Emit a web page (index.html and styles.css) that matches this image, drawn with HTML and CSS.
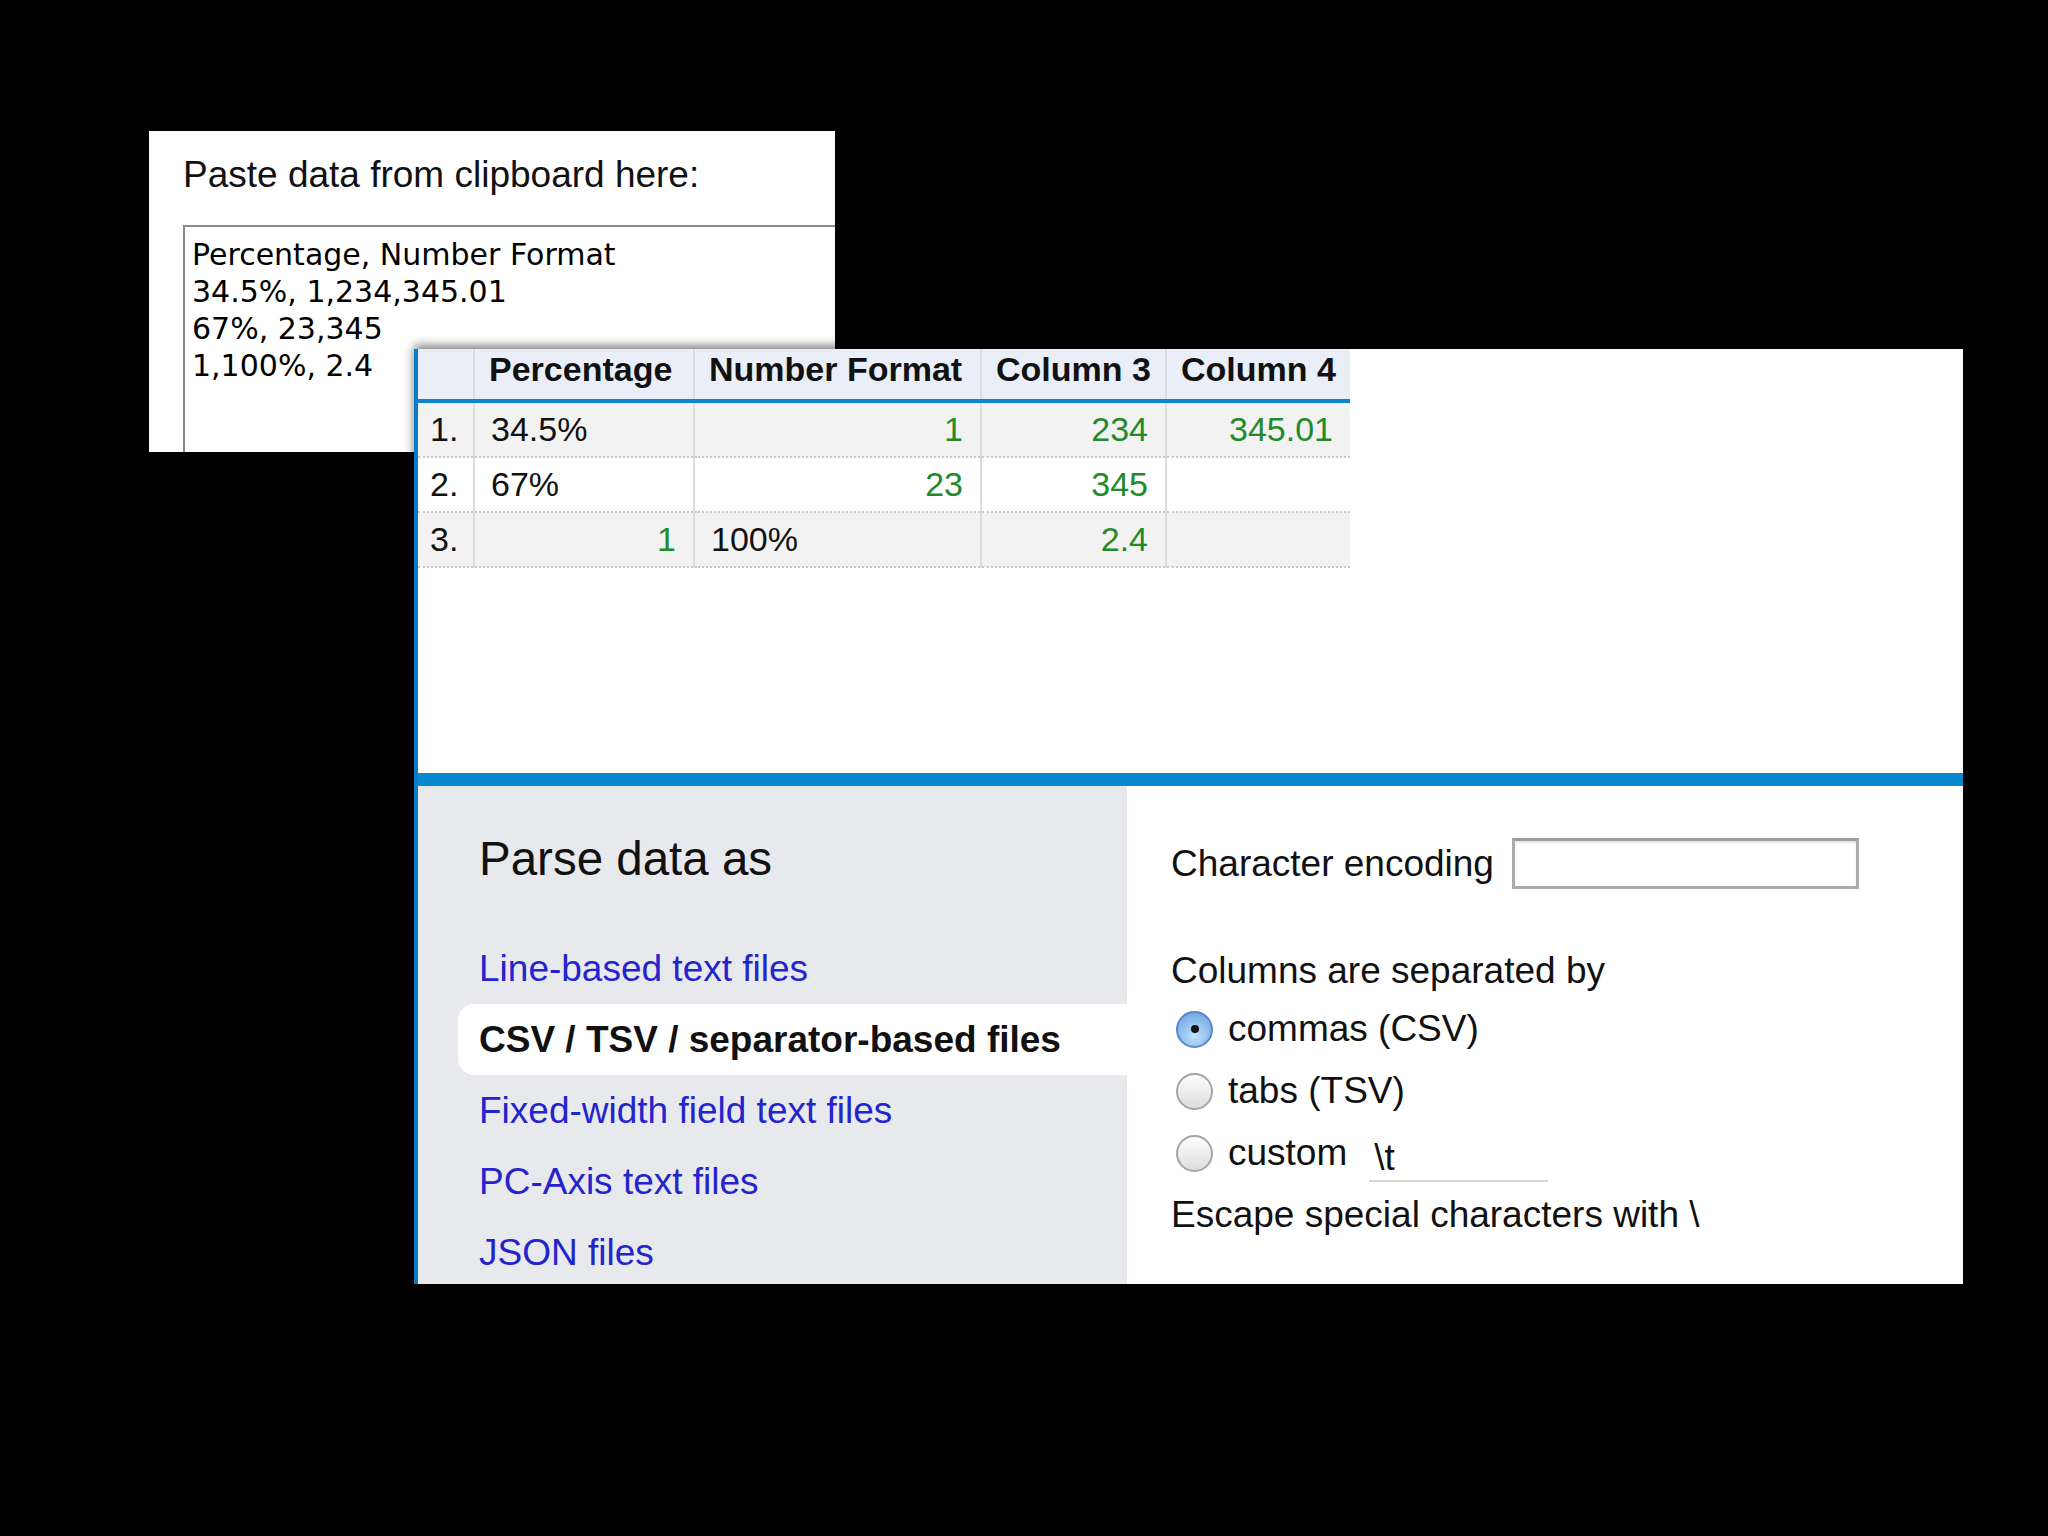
FILE: index.html
```html
<!DOCTYPE html>
<html>
<head>
<meta charset="utf-8">
<link rel="stylesheet" href="styles.css">
</head>
<body>
<div class="stage">
  <div class="paste">
    <div class="paste-label">Paste data from clipboard here:</div>
    <div class="paste-area">Percentage, Number Format
34.5%, 1,234,345.01
67%, 23,345
1,100%, 2.4</div>
  </div>

  <div class="front">
    <div class="preview">
      <table class="grid">
        <colgroup>
          <col class="c0"><col class="c1"><col class="c2"><col class="c3"><col class="c4">
        </colgroup>
        <thead>
          <tr><th></th><th>Percentage</th><th>Number Format</th><th>Column 3</th><th>Column 4</th></tr>
        </thead>
        <tbody>
          <tr class="odd"><td class="rn">1.</td><td>34.5%</td><td class="num">1</td><td class="num">234</td><td class="num">345.01</td></tr>
          <tr class="even"><td class="rn">2.</td><td>67%</td><td class="num">23</td><td class="num">345</td><td></td></tr>
          <tr class="odd"><td class="rn">3.</td><td class="num">1</td><td>100%</td><td class="num">2.4</td><td></td></tr>
        </tbody>
      </table>
    </div>
    <div class="bar"></div>
    <div class="options">
      <div class="formats">
        <div class="formats-title">Parse data as</div>
        <div class="fmt">Line-based text files</div>
        <div class="fmt selected">CSV / TSV / separator-based files</div>
        <div class="fmt">Fixed-width field text files</div>
        <div class="fmt">PC-Axis text files</div>
        <div class="fmt">JSON files</div>
      </div>
      <div class="settings">
        <div class="enc-row">
          <span>Character encoding</span>
          <span class="enc-input"></span>
        </div>
        <div class="sep-title">Columns are separated by</div>
        <div class="radios">
          <div class="radio-row"><span class="radio checked"></span><span>commas (CSV)</span></div>
          <div class="radio-row"><span class="radio"></span><span>tabs (TSV)</span></div>
          <div class="radio-row"><span class="radio"></span><span>custom</span><span class="custom-input">\t</span></div>
        </div>
        <div class="escape">Escape special characters with \</div>
      </div>
    </div>
  </div>
</div>
</body>
</html>
```

FILE: styles.css
```css
html, body {
  margin: 0;
  padding: 0;
  background: #000;
}

.stage {
  position: relative;
  width: 2048px;
  height: 1536px;
  overflow: hidden;
  background: #000;
}

/* back window */
.paste {
  position: absolute;
  left: 149px;
  top: 131px;
  width: 686px;
  height: 321px;
  background: #fff;
  overflow: hidden;
}

.paste-label {
  padding: 22px 0 0 34px;
  font-family: "Liberation Sans", Arial, sans-serif;
  font-size: 37px;
  line-height: 44px;
  color: #111;
}

.paste-area {
  margin: 28px 0 0 34px;
  width: 700px;
  height: 300px;
  border-top: 2px solid #8a8a8a;
  border-left: 2px solid #8a8a8a;
  padding: 9px 0 0 7px;
  box-sizing: border-box;
  font-family: "DejaVu Sans", Verdana, sans-serif;
  font-size: 30px;
  line-height: 37px;
  white-space: pre;
  color: #000;
}

/* front window */
.front {
  position: absolute;
  left: 414px;
  top: 349px;
  width: 1549px;
  height: 935px;
  box-sizing: border-box;
  border-left: 4px solid #0b7cc4;
  background: #fff;
  box-shadow: 0 -3px 10px rgba(0, 0, 0, 0.55);
  display: flex;
  flex-direction: column;
  font-family: "Liberation Sans", Arial, sans-serif;
}

.preview {
  height: 424px;
  flex: none;
}

.grid {
  border-collapse: collapse;
  table-layout: fixed;
  font-size: 34px;
  color: #111;
}

.c0 { width: 56px; }
.c1 { width: 220px; }
.c2 { width: 287px; }
.c3 { width: 185px; }
.c4 { width: 184px; }

.grid th {
  height: 52px;
  padding: 0 14px 9px;
  background: #e9eef8;
  font-weight: bold;
  text-align: left;
  white-space: nowrap;
  border-left: 2px solid #d9dde4;
  border-bottom: 4px solid #0b86cf;
  box-sizing: border-box;
}

.grid th:first-child {
  border-left: none;
}

.grid td {
  height: 53px;
  padding: 0 17px 0 16px;
  border-left: 2px solid #dcdcdc;
  border-bottom: 2px dotted #c6c6c6;
  white-space: nowrap;
}

.grid td.rn {
  border-left: none;
  padding: 0 0 0 12px;
}

.grid td.num {
  text-align: right;
  color: #24892b;
}

.grid tr.odd td { background: #f2f2f2; }
.grid tr.even td { background: #fff; }

.bar {
  height: 13px;
  flex: none;
  background: #0888cf;
}

.options {
  flex: 1;
  min-height: 0;
  display: flex;
  overflow: hidden;
}

.formats {
  width: 709px;
  flex: none;
  background: #e8e9ec;
  padding-top: 46px;
  box-sizing: border-box;
}

.formats-title {
  padding-left: 61px;
  font-size: 47.5px;
  line-height: 54px;
  color: #111;
  margin-bottom: 47px;
}

.fmt {
  margin-left: 40px;
  padding-left: 21px;
  height: 71px;
  line-height: 71px;
  font-size: 37px;
  color: #2424cc;
}

.fmt.selected {
  background: #fff;
  border-radius: 16px 0 0 16px;
  font-weight: bold;
  color: #111;
  font-size: 37px;
}

.settings {
  flex: 1;
  padding: 52px 0 0 44px;
  font-size: 37px;
  color: #111;
}

.enc-row {
  display: flex;
  align-items: center;
  gap: 18px;
  height: 51px;
}

.enc-input {
  width: 347px;
  height: 51px;
  box-sizing: border-box;
  border: 3px solid #ababab;
  border-top-color: #9d9d9d;
  background: #fff;
  box-shadow: inset 0 2px 2px #e6e6e6;
}

.sep-title {
  margin-top: 60px;
  line-height: 44px;
}

.radios {
  margin-top: 5px;
}

.radio-row {
  display: flex;
  align-items: center;
  height: 62px;
}

.radio {
  width: 37px;
  height: 37px;
  box-sizing: border-box;
  border-radius: 50%;
  border: 2px solid #a5a5a5;
  background: linear-gradient(#fdfdfd, #dedede);
  margin: 0 15px 0 5px;
  flex: none;
  display: flex;
  align-items: center;
  justify-content: center;
}

.radio.checked {
  border-color: #5b87c9;
  background: radial-gradient(circle at 50% 70%, #bfe0fb 0%, #8cbcec 55%, #6a9fdc 100%);
}

.radio.checked::after {
  content: "";
  width: 8px;
  height: 8px;
  border-radius: 50%;
  background: #111;
}

.custom-input {
  margin-left: 22px;
  width: 179px;
  padding-left: 5px;
  box-sizing: border-box;
  border-bottom: 2px solid #d4d4d4;
  line-height: 44px;
  position: relative;
  top: 6px;
}

.escape {
  line-height: 62px;
}
```
